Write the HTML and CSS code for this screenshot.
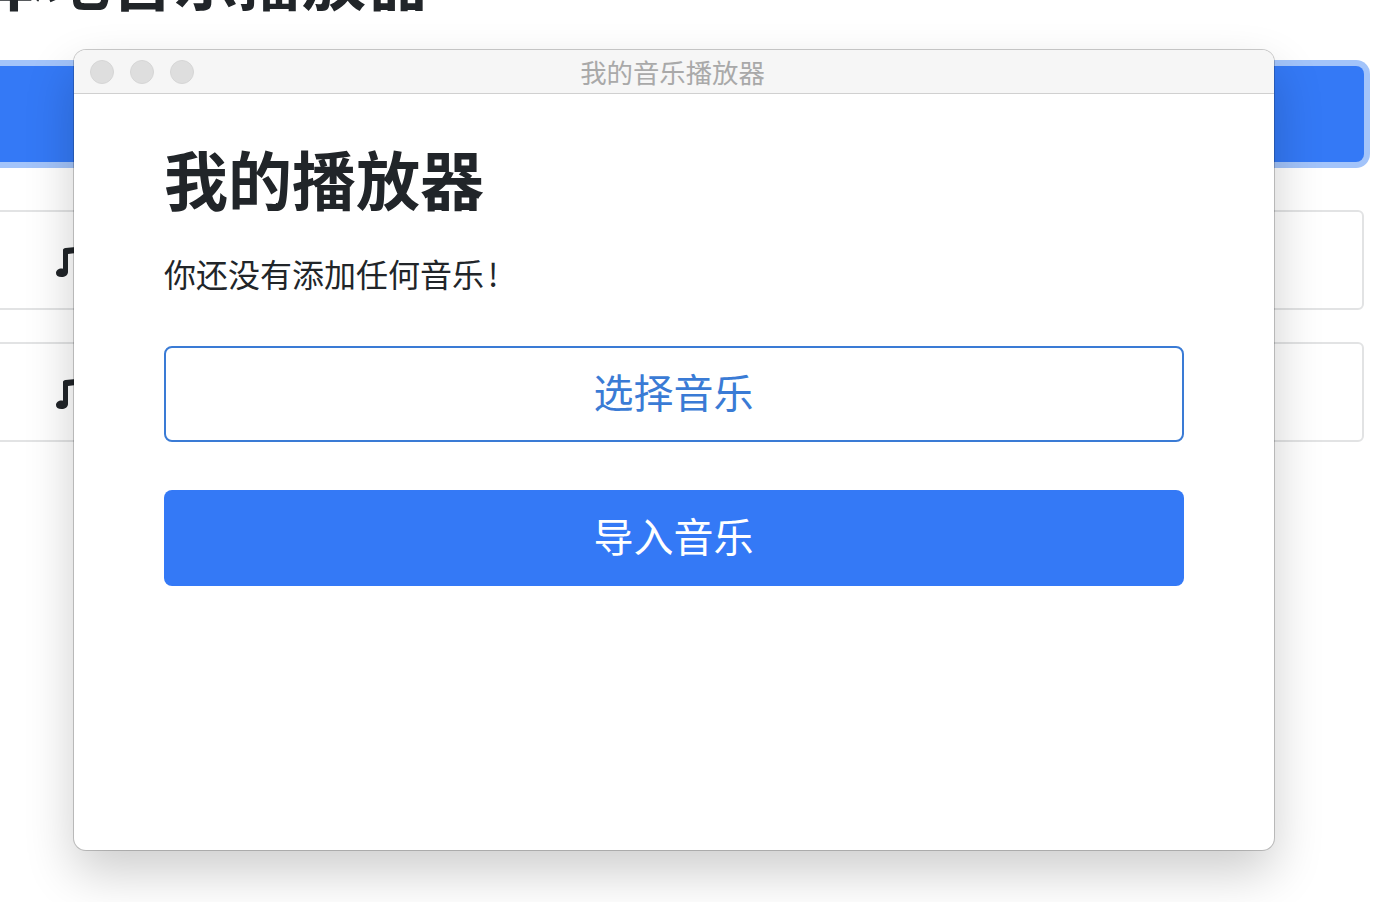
FILE: index.html
```html
<!DOCTYPE html>
<html lang="zh-CN">
<head>
<meta charset="utf-8">
<title>我的音乐播放器</title>
<link rel="stylesheet" href="styles.css">
</head>
<body>
<main class="page">
  <h1 class="page-title">本地音乐播放器</h1>
  <button class="page-btn" type="button"></button>
  <ul class="song-list">
    <li class="song"><svg class="note" viewBox="0 0 20 30"><path d="M7 3C7 2 8 1.200 9.500 1L20 0V6L12 7V25C12 28 9 30 5.500 30C2 30 0 28.500 0 26C0 23.500 2.500 21.500 5.500 21.500C6 21.500 6.500 21.600 7 21.700Z"/></svg></li>
    <li class="song"><svg class="note" viewBox="0 0 20 30"><path d="M7 3C7 2 8 1.200 9.500 1L20 0V6L12 7V25C12 28 9 30 5.500 30C2 30 0 28.500 0 26C0 23.500 2.500 21.500 5.500 21.500C6 21.500 6.500 21.600 7 21.700Z"/></svg></li>
  </ul>
</main>
<section class="window">
  <header class="titlebar">
    <span class="dot"></span>
    <span class="dot"></span>
    <span class="dot"></span>
    <span class="window-title">我的音乐播放器</span>
  </header>
  <div class="content">
    <h2 class="heading">我的播放器</h2>
    <p class="message">你还没有添加任何音乐<span class="bang">!</span></p>
    <button class="btn btn-outline" type="button">选择音乐</button>
    <button class="btn btn-solid" type="button">导入音乐</button>
  </div>
</section>
</body>
</html>
```
FILE: styles.css
```css
* { box-sizing: border-box; }
html, body { margin: 0; height: 100%; }
body {
  width: 1388px;
  height: 902px;
  overflow: hidden;
  position: relative;
  background: #fff;
  color: #212529;
  font-family: "Noto Sans CJK SC", "Liberation Sans", sans-serif;
}
.page {
  margin-left: -120px;
  width: 1484px;
}
.page-title {
  margin: -71px 0 0 102px;
  height: 96px;
  font-size: 64px;
  line-height: 96px;
  font-weight: 700;
  white-space: nowrap;
}
.page-btn {
  display: block;
  width: 100%;
  height: 96px;
  margin-top: 41px;
  background: #3479f6;
  border: 0;
  border-radius: 8px;
  box-shadow: 0 0 0 6px #a3c4fa;
}
.song-list {
  list-style: none;
  margin: 48px 0 0;
  padding: 0;
  display: flex;
  flex-direction: column;
  gap: 32px;
}
.song {
  height: 100px;
  border: 2px solid #e2e3e4;
  border-radius: 6px;
  padding: 35px 0 0 174px;
}
.note {
  display: block;
  width: 20px;
  height: 30px;
  fill: #212529;
}
.window {
  position: absolute;
  left: 74px;
  top: 50px;
  width: 1200px;
  height: 800px;
  background: #fff;
  border-radius: 12px;
  box-shadow: 0 0 0 1px rgba(0,0,0,.2), 0 22px 50px rgba(0,0,0,.2);
  overflow: hidden;
}
.titlebar {
  position: relative;
  display: flex;
  align-items: center;
  gap: 16px;
  height: 44px;
  padding: 0 0 0 16px;
  background: #f6f6f6;
  border-bottom: 1px solid #d0d0d0;
}
.dot {
  width: 24px;
  height: 24px;
  border-radius: 50%;
  background: #dedede;
  border: 1px solid #d6d6d6;
}
.window-title {
  position: absolute;
  left: 0;
  right: 3px;
  top: 0;
  text-align: center;
  font-size: 26.4px;
  line-height: 44px;
  color: #a9a9a9;
}
.content {
  padding: 43px 90px 0 90px;
}
.heading {
  margin: 0;
  font-size: 64px;
  line-height: 80px;
  font-weight: 700;
}
.message {
  margin: 32px 0 0;
  font-size: 32px;
  line-height: 48px;
}
.bang { margin-left: 4px; }
.btn {
  display: block;
  width: 1020px;
  height: 96px;
  font-family: inherit;
  font-size: 40px;
  font-weight: 400;
  line-height: 1;
  border-radius: 8px;
  padding: 0 1px 6px 0;
}
.btn-outline {
  margin-top: 49px;
  background: #fff;
  border: 2px solid #3a7bd5;
  color: #3a7bd5;
}
.btn-solid {
  margin-top: 48px;
  background: #3479f6;
  border: 0;
  color: #fff;
}
```
